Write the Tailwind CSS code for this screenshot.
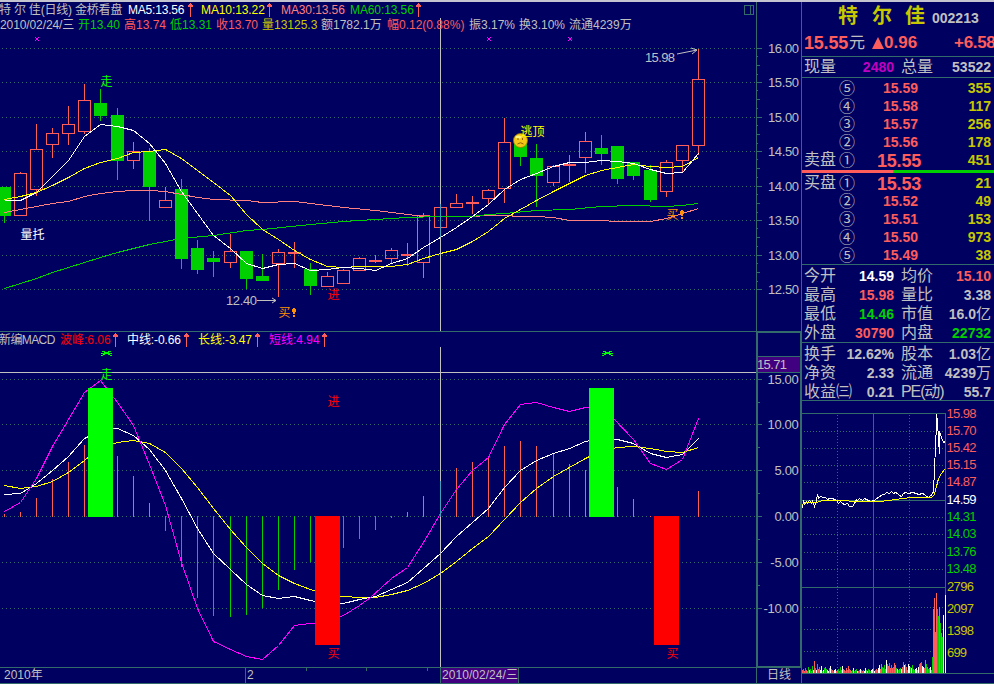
<!DOCTYPE html>
<html lang="zh-CN">
<head>
    <meta charset="UTF-8">
    <meta name="viewport" content="width=device-width, initial-scale=1.0">
    <title>特尔佳 002213 日线</title>
    <script src="https://cdn.jsdelivr.net/npm/@tailwindcss/browser@4"></script>
</head>
<body class="bg-[#000060] text-[#c0c0c0] font-['Liberation_Sans','Noto_Sans_CJK_SC',sans-serif] overflow-hidden">
    <div class="w-[994px] h-[684px] flex flex-col overflow-hidden">
        <div class="h-[2px] shrink-0 bg-[#c4c4d0]"></div>
        <div class="flex flex-1 min-h-0">

            <!-- Charts -->
            <main class="w-[801px] shrink-0 flex flex-col text-[12px] leading-[14px] whitespace-nowrap">

                <!-- Price chart -->
                <section class="relative h-[329px] shrink-0">
                    <svg class="absolute inset-0" width="801" height="329" viewBox="0 2 801 329">
                        <g id="price-grid" shape-rendering="crispEdges" stroke="#336b6b"></g>
                        <g id="candles" shape-rendering="crispEdges"></g>
                        <g fill="none" stroke-width="1" shape-rendering="crispEdges" transform="translate(.5 .5)">
                            <polyline stroke="#ff8080" points="4,212 20,209 36,206 52,203 68,201 84,196 100,193 117,191 133,190 149,190 165,191 181,194 197,197 213,199 246,200 262,202 294,201 310,203 327,205 343,207 375,210 407,214 423,216 440,216 472,216 488,215 504,215 520,216 536,216 553,217 569,220 600,220 617,221 650,221 666,218 682,213 698,208"/>
                            <polyline stroke="#00d000" points="4,288 20,283 36,278 52,272 68,267 84,262 100,257 117,252 133,248 149,244 165,241 181,238 213,235 246,230 262,229 310,224 343,221 375,219 407,217 440,216 472,216 488,214 504,213 536,210 569,209 601,206 633,205 666,206 682,205 698,203"/>
                            <polyline stroke="#ffff00" points="4,199 20,196 36,192 52,185 68,177 84,168 100,162 117,158 133,152 149,151 165,149 181,158 197,170 213,182 230,195 246,214 262,229 278,239 294,250 310,259 327,266 343,267 359,266 391,266 407,264 423,258 440,253 456,249 472,241 488,231 504,218 520,209 536,200 553,191 569,183 585,175 601,170 617,167 633,164 650,166 666,167 682,166 698,157"/>
                            <polyline stroke="#ffffff" points="4,200 20,200 36,192 52,176 68,160 84,136 100,124 117,126 133,130 149,143 165,163 181,191 197,213 213,235 230,248 246,263 262,268 278,264 294,263 310,270 327,269 343,267 359,268 375,270 391,263 407,258 423,247 440,237 456,227 472,216 488,204 504,189 520,179 536,173 553,166 569,162 585,162 601,160 617,161 633,163 650,169 666,173 682,172 698,153"/>
                        </g>
                        <g shape-rendering="crispEdges">
                            <rect x="440" y="18" width="1" height="313" fill="#c0c0c0"/>
                            <rect x="440" y="204" width="1" height="33" fill="#3f9fbf"/>
                            <rect x="756" y="2" width="1" height="329" fill="#336b6b"/>
                            <rect x="0" y="331" width="801" height="1" fill="#336b6b"/>
                        </g>
                        <!-- Split-view icon -->
                        <path d="M744.5 5.5h9v9h-9zM750.5 5.5v9" fill="none" stroke="#336b6b" shape-rendering="crispEdges"/>
                        <path d="M35 37l4 4m0-4l-4 4M487 37l4 4m0-4l-4 4M568 37l4 4m0-4l-4 4" stroke="#ff00ff" fill="none"/>
                        <!-- Signals -->
                        <g font-size="12">
                            <text x="100.500" y="85.500" fill="#00ff00">走</text>
                            <text x="20.500" y="238.500" fill="#ffffff">量托</text>
                            <text x="226" y="305" fill="#c0c0c0" font-size="13" textLength="31">12.40</text>
                            <text x="278.500" y="317" fill="#ff9000">买</text>
                            <text x="327.500" y="299" fill="#ff0000">进</text>
                            <text x="645" y="61.500" fill="#c0c0c0" font-size="13" textLength="30">15.98</text>
                            <text x="666.500" y="219" fill="#ff9000">买</text>
                        </g>
                        <path d="M257 300.500h19m-4-2.500l4 2.500l-4 2.500M677 54l20-4m-6-2l6 2l-5 4" fill="none" stroke="#c0c0c0"/>
                        <path d="M293 308h2v1h1v3h-1v2h-2v-2h-1v-3h1zM293 315h2v2h-2zM681 210h2v1h1v3h-1v2h-2v-2h-1v-3h1zM681 217h2v2h-2z" fill="#ff9000" shape-rendering="crispEdges"/>
                        <circle cx="520.500" cy="140.500" r="7" fill="#f4c814" stroke="#a07800" stroke-width=".8"/>
                        <ellipse cx="518.500" cy="137" rx="3" ry="1.500" fill="#fff27a"/>
                        <path d="M518 138v2M522.500 138v2M517.500 144q3-2.500 6 0" fill="none" stroke="#906000"/>
                        <text x="520.500" y="136" fill="#ffff00" font-size="12">逃顶</text>
                        <g id="price-labels" font-size="13" fill="#c0c0c0"></g>
                    </svg>

                    <div class="relative flex items-center h-[15px] pt-[1px]">
                        <span class="w-[129px] -ml-[1px] mr-[1px] tracking-[-0.2px]">特 尔 佳(日线) 金桥看盘</span>
                        <span class="w-[60px] -ml-[1px] text-white tracking-[-0.2px]">MA5:13.56</span>
                        <svg class="w-[5px] h-[14px] mr-[8px] shrink-0" viewBox="0 0 5 14"><path d="M2 0h1v1h1v1h1v2H0V2h1V1h1zM2 4h1v10H2z" fill="#ff5c5c"/></svg>
                        <span class="w-[66px] text-[#ffff00] tracking-[-0.1px]">MA10:13.22</span>
                        <svg class="w-[5px] h-[14px] mr-[9px] shrink-0" viewBox="0 0 5 14"><path d="M2 0h1v1h1v1h1v2H0V2h1V1h1zM2 4h1v10H2z" fill="#ff5c5c"/></svg>
                        <span class="w-[69px] text-[#ff8080] tracking-[-0.1px]">MA30:13.56</span>
                        <span class="w-[66px] text-[#00d000] tracking-[-0.1px]">MA60:13.56</span>
                        <svg class="w-[5px] h-[14px] shrink-0" viewBox="0 0 5 14"><path d="M2 0h1v1h1v1h1v2H0V2h1V1h1zM2 4h1v10H2z" fill="#ff5c5c"/></svg>
                    </div>
                    <div class="relative flex items-center h-[14px] pt-[1px]">
                        <span class="w-[78px] tracking-[-0.1px]">2010/02/24/三</span>
                        <span class="w-[46px] text-[#00d000]">开13.40</span>
                        <span class="w-[46px] text-[#ff5c5c]">高13.74</span>
                        <span class="w-[46px] text-[#00d000]">低13.31</span>
                        <span class="w-[46px] text-[#ff5c5c]">收13.70</span>
                        <span class="w-[59px] text-[#c8c800]">量13125.3</span>
                        <span class="w-[66px]">额1782.1万</span>
                        <span class="w-[82px] text-[#ff5c5c]">幅0.12(0.88%)</span>
                        <span class="w-[50px]">振3.17%</span>
                        <span class="w-[50px]">换3.10%</span>
                        <span class="w-[70px]">流通4239万</span>
                    </div>
                </section>

                <!-- MACD chart -->
                <section class="relative h-[336px] shrink-0">
                    <svg class="absolute inset-0" width="801" height="336" viewBox="0 331 801 336">
                        <g id="macd-grid" shape-rendering="crispEdges" stroke="#336b6b"></g>
                        <g id="macd-bars" shape-rendering="crispEdges"></g>
                        <g fill="none" stroke-width="1" shape-rendering="crispEdges" transform="translate(.5 .5)">
                            <polyline stroke="#ffff00" points="4,485 20,488 36,486 52,481 68,472 84,460 100,447 117,442 133,440 149,443 165,452 181,468 197,487 213,508 230,529 246,547 262,563 278,575 294,583 310,589 327,595 343,596 359,597 375,597 391,594 407,590 423,583 440,573 456,561 472,548 488,536 504,519 520,502 536,488 553,476 569,467 585,458 601,450 617,447 633,446 650,448 666,451 682,452 698,447"/>
                            <polyline stroke="#ffffff" points="4,494 20,493 36,483 52,470 68,456 84,438 100,430 117,428 133,435 149,449 165,470 181,498 197,528 213,553 230,569 246,584 262,595 278,598 294,596 310,600 327,604 343,603 359,599 375,596 391,589 407,582 423,568 440,553 456,536 472,522 488,508 504,487 520,470 536,460 553,453 569,448 585,441 601,438 617,439 633,443 650,453 666,457 682,454 698,438"/>
                            <polyline stroke="#ff00ff" points="4,511 20,502 36,478 52,446 68,419 84,392 100,380 117,402 133,425 149,464 165,505 181,562 197,608 213,641 230,649 246,656 262,659 278,645 294,625 310,623 327,622 343,615 359,605 370,597 391,578 407,567 423,542 440,513 456,489 472,470 488,457 504,424 520,404 536,402 553,407 569,411 585,407 601,406 614,419 633,439 650,463 666,469 682,459 698,418"/>
                        </g>
                        <g shape-rendering="crispEdges">
                            <rect x="88" y="388" width="25" height="129" fill="#00ff00"/>
                            <rect x="589" y="388" width="25" height="129" fill="#00ff00"/>
                            <rect x="315" y="516" width="25" height="129" fill="#ff0000"/>
                            <rect x="654" y="516" width="25" height="129" fill="#ff0000"/>
                            <rect x="0" y="372" width="756" height="1" fill="#c0c0c0"/>
                            <rect x="440" y="347" width="1" height="320" fill="#c0c0c0"/>
                            <rect x="440" y="481" width="1" height="36" fill="#3f9fbf"/>
                            <!-- Axis frame -->
                            <path d="M0 331h801v2H756v-1H0zM756 331h2v336h-2zM800 331h1v336h-1zM756 666h45v1h-45z" fill="#336b6b"/>
                            <rect x="758" y="356" width="42" height="17" fill="#400080"/>
                            <path d="M758 356h42v1h-42zM758 372h42v1h-42z" fill="#336b6b"/>
                        </g>
                        <!-- Clipped peak marks -->
                        <path d="M102 351h3v1h-3zM108 351h3v1h-3zM104 352h5v1h-5zM101 353h11v1h-11zM103 354h2v1h-2zM108 354h2v1h-2zM101 355h2v1h-2zM110 355h2v1h-2zM603 351h3v1h-3zM609 351h3v1h-3zM605 352h5v1h-5zM602 353h11v1h-11zM604 354h2v1h-2zM609 354h2v1h-2zM602 355h2v1h-2zM611 355h2v1h-2z" fill="#00ff00" shape-rendering="crispEdges"/>
                        <g font-size="12">
                            <text x="100.500" y="378.500" fill="#00ff00">走</text>
                            <text x="327.500" y="406" fill="#ff0000">进</text>
                            <text x="327.500" y="658" fill="#ff0000">买</text>
                            <text x="666.500" y="658" fill="#ff0000">买</text>
                        </g>
                        <text x="757" y="368.500" fill="#c0c0c0" font-size="13" textLength="30">15.71</text>
                        <g id="macd-labels" font-size="13" fill="#c0c0c0"></g>
                    </svg>

                    <div class="relative flex items-center h-[16px] pt-[2px]">
                        <span class="w-[61px] -ml-[1px] tracking-[-0.6px]">新编MACD</span>
                        <span class="w-[53px] text-[#ff0000]">波峰:6.06</span>
                        <svg class="w-[5px] h-[14px] mr-[9px] shrink-0" viewBox="0 0 5 14"><path d="M2 0h1v1h1v1h1v2H0V2h1V1h1zM2 4h1v10H2z" fill="#ff5c5c"/></svg>
                        <span class="w-[57px] text-white tracking-[-0.1px]">中线:-0.66</span>
                        <svg class="w-[5px] h-[14px] mr-[9px] shrink-0" viewBox="0 0 5 14"><path d="M2 0h1v1h1v1h1v2H0V2h1V1h1zM2 4h1v10H2z" fill="#ff5c5c"/></svg>
                        <span class="w-[57px] text-[#ffff00] tracking-[-0.1px]">长线:-3.47</span>
                        <svg class="w-[5px] h-[14px] mr-[9px] shrink-0" viewBox="0 0 5 14"><path d="M2 0h1v1h1v1h1v2H0V2h1V1h1zM2 4h1v10H2z" fill="#ff5c5c"/></svg>
                        <span class="w-[53px] text-[#ff00ff]">短线:4.94</span>
                        <svg class="w-[5px] h-[14px] shrink-0" viewBox="0 0 5 14"><path d="M2 0h1v1h1v1h1v2H0V2h1V1h1zM2 4h1v10H2z" fill="#ff5c5c"/></svg>
                    </div>
                </section>

                <!-- Date bar -->
                <footer class="flex h-[17px] border-y border-[#336b6b] leading-[15px]">
                    <span class="w-[245px] pl-1">2010年</span>
                    <div class="flex w-[195px] border-l border-[#336b6b] pl-[1px]">
                        <span class="w-[59px]">2</span>
                        <i class="w-px h-[3px] bg-[#336b6b] mr-[59px]"></i>
                        <i class="w-px h-[3px] bg-[#336b6b] mr-[60px]"></i>
                        <i class="w-px h-[3px] bg-[#336b6b]"></i>
                    </div>
                    <span class="w-[79px] bg-[#400080] border-x border-[#336b6b] pl-px tracking-[0.05px]">2010/02/24/三</span>
                    <span class="ml-[237px] flex-1 border-l border-[#336b6b] pl-[10px]">日线</span>
                </footer>
            </main>

            <!-- Quote panel -->
            <aside class="flex-1 min-w-0 flex flex-col border-l border-[#336b6b] overflow-hidden whitespace-nowrap text-[14px] leading-[18px] font-bold">
                <div class="h-[55px] shrink-0 border-b border-[#336b6b]">
                    <div class="flex items-center h-[28px] pl-[36px]">
                        <span class="w-[34px] text-[20px] text-[#c8c800]">特</span>
                        <span class="w-[33px] text-[20px] text-[#c8c800]">尔</span>
                        <span class="w-[27px] text-[20px] text-[#c8c800]">佳</span>
                        <span class="pt-[3px]">002213</span>
                    </div>
                    <div class="flex items-center h-[26px] pl-[2px] text-[17px] text-[#ff5c5c]">
                        <span class="w-[45px] text-[18px] tracking-[-0.2px]">15.55</span>
                        <span class="w-[23px] text-[16px] font-normal text-[#c0c0c0]">元</span>
                        <svg class="w-[12px] h-[12px] shrink-0" viewBox="0 0 12 12"><path d="M6 0l6 12H0z" fill="#ff5c5c"/></svg>
                        <span class="w-[70px] shrink-0">0.96</span>
                        <!-- The percent sign runs past the panel edge -->
                        <span class="flex-1 min-w-0 overflow-hidden tracking-[-0.3px]">+6.58</span>
                    </div>
                </div>
                <div class="h-[21px] shrink-0 border-b border-[#336b6b] flex items-center pl-[2px] pr-[3px]">
                    <span class="text-[16px] font-normal w-[40px]">现量</span>
                    <span class="w-[50px] text-right text-[#c000c0]">2480</span>
                    <span class="text-[16px] font-normal ml-[7px]">总量</span>
                    <span class="ml-auto">53522</span>
                </div>

                <!-- Sell orders -->
                <div id="asks" class="h-[92px] shrink-0 pt-[1px]"></div>
                <div class="flex h-[3px] shrink-0 -ml-px">
                    <div class="w-[92px] bg-[#ff5c5c]"></div>
                    <div class="flex-1 bg-[#00d000]"></div>
                </div>
                <!-- Buy orders -->
                <div id="bids" class="h-[92px] shrink-0 pt-[1px] border-b border-[#336b6b]"></div>

                <div class="h-[78px] shrink-0 border-b border-[#336b6b] pl-[2px] pr-[3px]">
                    <div class="flex items-center h-[19px] pt-[2px]">
                        <span class="text-[16px] font-normal w-[40px]">今开</span><span class="w-[50px] text-right text-white">14.59</span>
                        <span class="text-[16px] font-normal ml-[7px]">均价</span><span class="ml-auto text-[#ff5c5c]">15.10</span>
                    </div>
                    <div class="flex items-center h-[19px] pt-[2px]">
                        <span class="text-[16px] font-normal w-[40px]">最高</span><span class="w-[50px] text-right text-[#ff5c5c]">15.98</span>
                        <span class="text-[16px] font-normal ml-[7px]">量比</span><span class="ml-auto">3.38</span>
                    </div>
                    <div class="flex items-center h-[19px] pt-[2px]">
                        <span class="text-[16px] font-normal w-[40px]">最低</span><span class="w-[50px] text-right text-[#00d000]">14.46</span>
                        <span class="text-[16px] font-normal ml-[7px]">市值</span><span class="ml-auto flex items-center">16.0<b class="text-[15px] font-normal">亿</b></span>
                    </div>
                    <div class="flex items-center h-[19px] pt-[2px]">
                        <span class="text-[16px] font-normal w-[40px]">外盘</span><span class="w-[50px] text-right text-[#ff5c5c]">30790</span>
                        <span class="text-[16px] font-normal ml-[7px]">内盘</span><span class="ml-auto text-[#00d000]">22732</span>
                    </div>
                </div>
                <div class="h-[58px] shrink-0 border-b border-[#336b6b] pl-[2px] pr-[3px]">
                    <div class="flex items-center h-[19px] pt-[2px]">
                        <span class="text-[16px] font-normal w-[40px]">换手</span><span class="w-[50px] flex justify-end">12.62%</span>
                        <span class="text-[16px] font-normal ml-[7px]">股本</span><span class="ml-auto flex items-center">1.03<b class="text-[15px] font-normal">亿</b></span>
                    </div>
                    <div class="flex items-center h-[19px] pt-[2px]">
                        <span class="text-[16px] font-normal w-[40px]">净资</span><span class="w-[50px] text-right">2.33</span>
                        <span class="text-[16px] font-normal ml-[7px]">流通</span><span class="ml-auto flex items-center">4239<b class="text-[15px] font-normal">万</b></span>
                    </div>
                    <div class="flex items-center h-[19px] pt-[2px]">
                        <span class="text-[16px] font-normal w-[50px]">收益㈢</span><span class="w-[40px] text-right">0.21</span>
                        <span class="text-[16px] font-normal ml-[7px] tracking-[-1.1px]">PE(动)</span><span class="ml-auto">55.7</span>
                    </div>
                </div>

                <!-- Intraday chart -->
                <svg class="shrink-0 -ml-px" width="193" height="283" viewBox="801 401 193 283">
                    <g id="day-grid" shape-rendering="crispEdges" stroke="#336b6b"></g>
                    <g id="day-volume" shape-rendering="crispEdges"></g>
                    <g fill="none" shape-rendering="crispEdges" transform="translate(.5 .5)">
                        <polyline stroke="#ffffff" points="801,501 802,507 803,500 804,504 806,501 807,503 809,500 811,503 812,501 814,506 816,500 817,494 818,498 820,496 823,497 825,497 827,499 829,498 832,498 836,500 838,503 840,501 842,503 844,504 847,503 849,506 852,506 854,503 856,499 857,500 859,498 862,500 864,498 866,499 870,501 874,500 876,498 878,497 882,494 884,494 886,492 889,493 891,491 893,493 895,492 897,493 899,495 901,496 903,493 905,492 908,493 912,492 916,493 918,494 922,493 924,494 926,496 928,497 930,495 932,494 933,490 934,470 935,445 936,425 936,414 937,420 938,440 939,453 939,431 941,437 943,442 945,441"/>
                        <polyline stroke="#ffff00" points="801,504 806,502 816,502 822,500 836,500 860,501 880,501 895,499 910,497 931,497 934,494 936,486 938,478 941,473 944,469"/>
                    </g>
                    <g id="day-labels" font-size="13" font-weight="400"></g>
                </svg>
            </aside>
        </div>
    </div>

    <script>
        const put = (id, html) => document.getElementById(id).insertAdjacentHTML('beforeend', html);
        const rect = (x, y, w, h, fill) => `<rect x="${x}" y="${y}" width="${w}" height="${h}" fill="${fill}"/>`;
        const RED = '#ff5c5c', GREEN = '#00d000';

        // Price axis
        [48, 82, 117, 151, 186, 220, 255, 289].forEach((y, i) => {
            put('price-grid', `<path d="M2 ${y + .5}H756" stroke-dasharray="1 3"/><path d="M757 ${y + .5}h5"/>`);
            if (i < 7) put('price-grid', `<path d="M757 ${y + 8.5}h1M757 ${y + 17.5}h3M757 ${y + 26.5}h1"/>`);
            put('price-labels', `<text x="768" y="${y + 5}" textLength="31">${(16 - i * .5).toFixed(2)}</text>`);
        });

        // x, high, body top, body bottom, low, 1 = up / 0 = down
        const candles = [
            [4,187,187,216,223,0],[20,172,173,216,216,1],[36,124,149,190,196,1],[52,128,133,145,158,1],
            [68,106,124,134,145,1],[84,84,100,132,134,1],[100,89,103,116,121,0],[117,108,115,161,180,0],
            [133,142,151,161,169,1],[149,148,151,187,221,0],[165,187,200,208,208,1],[181,179,189,259,269,0],
            [197,240,248,270,274,0],[213,251,258,262,277,0],[230,234,251,263,268,1],[246,251,251,279,289,0],
            [262,254,276,281,281,0],[278,249,252,264,297,1],[294,242,252,254,268,1],[310,263,269,286,295,0],
            [327,272,276,287,287,1],[343,269,270,284,284,1],[359,257,258,271,271,1],[375,255,260,262,263,1],
            [391,248,250,259,264,1],[407,243,254,256,266,1],[423,213,215,263,278,1],[440,207,207,228,228,1],
            [456,194,203,208,208,1],[472,196,202,204,214,1],[488,189,190,199,205,1],[504,118,142,189,203,1],
            [520,137,140,157,166,0],[536,144,158,176,207,0],[553,165,166,183,186,1],[569,155,164,166,182,1],
            [585,132,141,158,173,1],[601,135,148,154,165,0],[617,146,146,179,184,0],[633,162,162,176,180,0],
            [650,165,170,200,202,0],[666,160,162,192,197,1],[682,145,145,161,173,1],[698,49,79,146,155,1]
        ];
        candles.forEach(([x, hi, top, bot, lo, up]) => {
            const c = up ? RED : GREEN;
            put('candles', rect(x, hi, 1, top - hi, c) + rect(x, bot, 1, lo - bot, c));
            if (up && bot - top > 2) {
                put('candles', `<rect x="${x - 5.5}" y="${top + .5}" width="12" height="${bot - top - 1}" fill="none" stroke="${c}"/>`);
            } else {
                put('candles', rect(x - 6, top, 13, bot - top, c));
            }
        });

        // MACD axis
        [379, 424, 470, 516, 562, 608].forEach((y, i) => {
            put('macd-grid', `<path d="M2 ${y + .5}H756" stroke-dasharray="1 3"/><path d="M757 ${y + .5}h5"/>`);
            if (i < 5) put('macd-grid', `<path d="M757 ${y + 23.5}h3"/>`);
            put('macd-labels', `<text x="798.5" y="${y + 5}" text-anchor="end" letter-spacing="-.3">${(15 - i * 5).toFixed(2)}</text>`);
        });

        // Histogram: x, end y, measured from the zero line at 516
        [[4,514],[20,512],[36,498],[52,479],[68,462],[84,445],[117,456],[133,476],[149,503],[165,531],[181,567],
         [197,598],[213,616],[230,617],[246,615],[262,608],[278,590],[294,570],[310,562],[343,548],[359,539],
         [375,530],[391,518],[407,512],[423,496],[456,468],[472,462],[488,458],[504,446],[520,441],[536,446],
         [553,453],[569,464],[585,470],[617,487],[633,499],[650,516],[698,491]].forEach(([x, y]) => {
            put('macd-bars', y <= 516 ? rect(x, y, 1, 517 - y, RED) : rect(x, 516, 1, y - 516, GREEN));
        });

        // Order book
        const row = (label, n, price, vol, big) => `
            <div class="flex items-center h-[18px] pl-[2px] pr-[3px]">
                <span class="w-[35px] text-[16px] font-normal">${label}</span>
                <span class="w-[30px] h-[18px] text-[16px] leading-[16px] font-normal font-['Noto_Sans_CJK_SC']">${n}</span>
                <span class="w-[52px] text-right text-[#ff5c5c] ${big ? 'text-[18px] tracking-[-0.2px] pt-[2px]' : 'pr-[3px]'}">${price}</span>
                <span class="ml-auto text-[#c8c800]">${vol}</span>
            </div>`;
        put('asks', row('', '⑤', '15.59', 355) + row('', '④', '15.58', 117) + row('', '③', '15.57', 256) +
            row('', '②', '15.56', 178) + row('卖盘', '①', '15.55', 451, true));
        put('bids', row('买盘', '①', '15.53', 21, true) + row('', '②', '15.52', 49) + row('', '③', '15.51', 153) +
            row('', '④', '15.50', 973) + row('', '⑤', '15.49', 38));

        // Intraday grid
        [431, 448, 465, 482, 517, 534, 552, 569, 607, 629, 651].forEach(y =>
            put('day-grid', `<path d="M804 ${y + .5}H945" stroke-dasharray="1 2"/>`));
        [837, 909].forEach(x => put('day-grid', `<path d="M${x + .5} 415V673" stroke-dasharray="1 2"/>`));
        put('day-grid', '<path d="M801 413.5H946M801 500.5H946M801 587.5H946M801 673.5H994M801 683.5H994M873.5 413V673M945.5 413V673M801.5 401V684"/>');

        [['15.98', 413, RED], ['15.70', 430, RED], ['15.42', 447, RED], ['15.15', 464, RED], ['14.87', 481, RED],
         ['14.59', 499, '#ffffff'], ['14.31', 516, GREEN], ['14.03', 533, GREEN], ['13.76', 551, GREEN], ['13.48', 568, GREEN]]
            .forEach(([t, y, c]) => put('day-labels', `<text x="946.5" y="${y + 5}" fill="${c}" textLength="30">${t}</text>`));
        [['2796', 586, 27], ['2097', 608, 27], ['1398', 630, 27], ['699', 652, 20]]
            .forEach(([t, y, w]) => put('day-labels', `<text x="947" y="${y + 5}" fill="#c8c800" textLength="${w}">${t}</text>`));

        // Volume bars up to the late spike
        const heights = [3,4,2,5,3,2,6,3,4,2,7,3,12,5,3,9,4,6,3,7,2,3,5,6,4,3,2,5,7,4,3,2,3,4,2,3,4,2,6,3,7,4,3,2,5,3,7,4,3,2,
            3,5,2,3,4,2,2,3,4,3,2,3,2,5,3,2,4,3,2,3,4,5,2,3,4,3,5,8,4,9,6,5,8,4,13,9,7,10,5,8,5,6,10,8,5,4,3,4,5,4,6,11,8,9,
            6,3,9,7,6,5,8,4,3,4,5,3,6,9,10,11,7,6,5,13,9,6,4,5,6,3,7];
        const tones = [RED, GREEN, '#ffffff', RED, GREEN, RED, '#ffffff', GREEN, '#ffffff', RED, GREEN];
        heights.forEach((h, i) => put('day-volume', rect(802 + i, 673 - h, 1, h, tones[(i * 7 + (i >> 2) * 3) % 11])));
        [[932,657,GREEN],[933,609,RED],[934,598,RED],[935,632,RED],[936,593,RED],[937,609,GREEN],[938,616,GREEN],
         [939,607,RED],[940,623,GREEN],[941,633,RED],[942,637,GREEN],[943,615,'#ffffff'],[945,595,'#ffffff']]
            .forEach(([x, y, c]) => put('day-volume', rect(x, y, 1, 673 - y, c)));
    </script>
</body>
</html>
